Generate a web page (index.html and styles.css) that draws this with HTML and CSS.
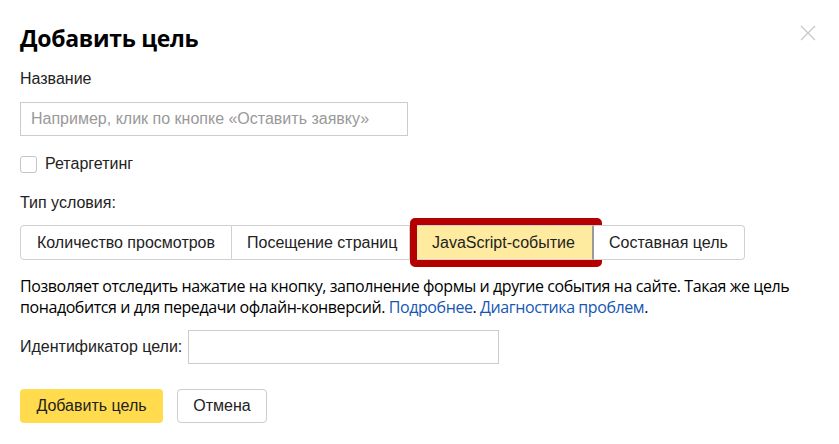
FILE: index.html
```html
<!DOCTYPE html>
<html lang="ru">
<head>
<meta charset="utf-8">
<link rel="stylesheet" href="styles.css">
</head>
<body>
<div class="dialog">
  <button class="close" aria-label="Закрыть">
    <svg width="16" height="16" viewBox="0 0 16 16"><path d="M1 1L15 15M15 1L1 15" stroke="#c8c8c8" stroke-width="1.3" fill="none"/></svg>
  </button>
  <h1 class="title">Добавить цель</h1>
  <div class="label">Название</div>
  <div class="input name-input"><span class="placeholder">Например, клик по кнопке «Оставить заявку»</span></div>
  <label class="check"><span class="box"></span><span>Ретаргетинг</span></label>
  <div class="label type-label">Тип условия:</div>
  <div class="segments">
    <div class="seg">Количество просмотров</div>
    <div class="seg">Посещение страниц</div>
    <div class="seg seg-active"><span class="mark"></span>JavaScript-событие</div>
    <div class="seg seg-last">Составная цель</div>
  </div>
  <p class="desc">Позволяет отследить нажатие на кнопку, заполнение формы и другие события на сайте. Такая же цель понадобится и для передачи офлайн-конверсий. <a href="#">Подробнее</a>. <a href="#">Диагностика проблем</a>.</p>
  <div class="id-row">
    <span class="id-label">Идентификатор цели:</span>
    <div class="input id-input"></div>
  </div>
  <div class="actions">
    <button class="btn btn-primary">Добавить цель</button>
    <button class="btn btn-plain">Отмена</button>
  </div>
</div>
</body>
</html>
```
FILE: styles.css
```css
html, body {
  margin: 0;
  padding: 0;
  background: #fff;
}
.dialog {
  position: relative;
  width: 839px;
  height: 444px;
  box-sizing: border-box;
  padding: 22px 20px 0 20px;
  font-family: "Liberation Sans", Arial, sans-serif;
  font-size: 16px;
  color: #000;
}
.close {
  position: absolute;
  top: 25px;
  right: 23px;
  width: 16px;
  height: 16px;
  padding: 0;
  border: 0;
  background: none;
}
.close svg { display: block; }
.title {
  margin: 0;
  font-family: "Open Sans", sans-serif;
  font-weight: 700;
  font-size: 23px;
  line-height: 32px;
  letter-spacing: -0.3px;
}
.label {
  margin-top: 16px;
  line-height: 18px;
  color: #222;
}
.input {
  box-sizing: border-box;
  height: 34px;
  border: 1px solid #ccc;
  background: #fff;
}
.name-input {
  margin-top: 14px;
  width: 388px;
  padding: 0 10px;
  display: flex;
  align-items: center;
}
.placeholder { color: #999; }
.check {
  display: flex;
  align-items: center;
  gap: 8px;
  margin-top: 19px;
  line-height: 18px;
  color: #222;
}
.box {
  box-sizing: border-box;
  width: 17px;
  height: 17px;
  border: 1px solid #c4c4c4;
  border-radius: 3px;
  background: #fff;
}
.type-label { margin-top: 21px; }
.segments {
  display: flex;
  margin-top: 13px;
  height: 35px;
}
.seg {
  position: relative;
  box-sizing: border-box;
  height: 35px;
  display: flex;
  align-items: center;
  padding: 0 15px;
  border: 1px solid #d0d0d0;
  border-left: 0;
  background: #fff;
  color: #222;
  white-space: nowrap;
}
.seg:first-child {
  border-left: 1px solid #d0d0d0;
  border-radius: 4px 0 0 4px;
  width: 212px;
  padding-left: 16px;
}
.seg:nth-child(2) { width: 178px; }
.seg-active {
  width: 184px;
  padding-left: 22px;
  background: #ffeba0;
  border-right: 2px solid #9a9a9a;
}
.seg-last {
  width: 151px;
  padding-left: 15px;
  border-radius: 0 4px 4px 0;
}
.mark {
  position: absolute;
  left: 0;
  top: -8px;
  width: 192px;
  height: 49px;
  box-sizing: border-box;
  border: 7px solid #b40000;
  border-radius: 5px;
  pointer-events: none;
}
.desc {
  margin: 16px 0 0 0;
  font-family: "Open Sans", sans-serif;
  font-size: 16px;
  line-height: 21px;
  letter-spacing: -0.42px;
  width: 799px;
}
.desc a {
  color: #1657b3;
  text-decoration: none;
}
.id-row {
  display: flex;
  align-items: center;
  margin-top: 12px;
  gap: 6px;
}
.id-label { color: #222; }
.id-input { width: 311px; }
.actions {
  display: flex;
  gap: 14px;
  margin-top: 25px;
}
.btn {
  height: 34px;
  box-sizing: border-box;
  border-radius: 4px;
  font-family: "Liberation Sans", Arial, sans-serif;
  font-size: 16px;
  padding: 0;
  color: #222;
}
.btn-primary {
  width: 143px;
  background: #ffdb4d;
  border: 0;
}
.btn-plain {
  width: 90px;
  background: #fff;
  border: 1px solid #ccc;
}
```
